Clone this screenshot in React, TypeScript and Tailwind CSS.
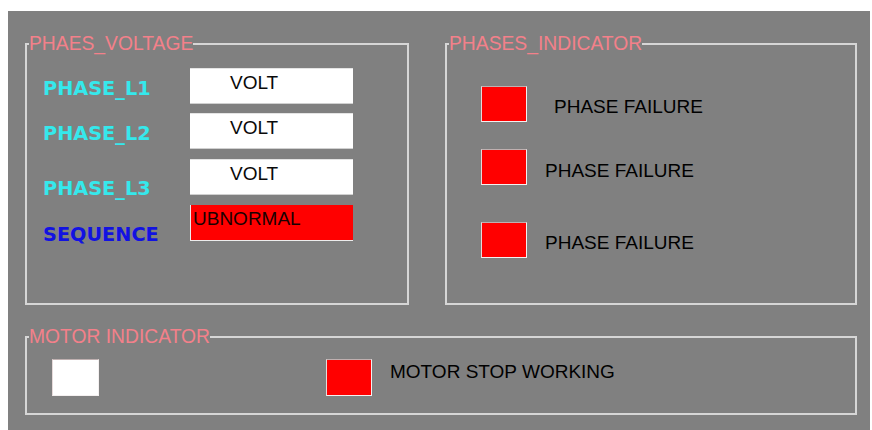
import React from "react";

const sans = { fontFamily: '"Liberation Sans", Arial, sans-serif' };
const bold = { fontFamily: '"DejaVu Sans", Verdana, sans-serif' };

function Group({
  title,
  className,
  children,
}: {
  title: string;
  className: string;
  children: React.ReactNode;
}) {
  return (
    <fieldset className={`border-2 border-[#d6d6d6] px-0 ${className}`}>
      <legend
        className="ml-[2px] p-0 text-[19.3px] leading-[20px] text-[#f3808a]"
        style={sans}
      >
        {title}
      </legend>
      {children}
    </fieldset>
  );
}

function ValueBox({ text, alarm, className }: { text: string; alarm?: boolean; className: string }) {
  return (
    <div
      className={`h-[36px] w-[163px] ${
        alarm
          ? "border-b border-l border-[#ececec] bg-[#ff0000] pl-[2px] text-[#1a0000]"
          : "border-b border-t border-b-[#d0d0d0] border-t-[#e4e4e4] bg-white pl-[40px] text-[#0a0a0a]"
      } pt-[4px] text-[19px] leading-[20px] ${className}`}
      style={sans}
    >
      {text}
    </div>
  );
}

function Lamp({ on, className }: { on: boolean; className: string }) {
  return (
    <div
      className={`h-[36px] w-[46px] shrink-0 border border-b-[#f4f0f0] border-l-[#e6dada] border-r-[#f4f0f0] border-t-[#bfb0b0] ${
        on ? "bg-[#ff0000]" : "bg-white"
      } ${className}`}
    />
  );
}

export default function App() {
  const labels = [
    { text: "PHASE_L1", color: "text-[#35e8ec]", mt: "mt-[25px]" },
    { text: "PHASE_L2", color: "text-[#35e8ec]", mt: "mt-[25px]" },
    { text: "PHASE_L3", color: "text-[#35e8ec]", mt: "mt-[35px]" },
    { text: "SEQUENCE", color: "text-[#1212e2]", mt: "mt-[26px]" },
  ];

  return (
    <div className="h-[430px] w-[872px] bg-white pl-[8px] pr-[2px] pt-[11px]">
      <div className="flex h-[419px] w-[862px] flex-col bg-[#808080] pl-[17px] pt-[23px]">
        <div className="flex gap-[36px]">
          <Group title="PHAES_VOLTAGE" className="w-[384px]">
            <div className="flex h-[249px]">
              <div className="flex w-[163px] shrink-0 flex-col pl-[16px]">
                {labels.map((l) => (
                  <div
                    key={l.text}
                    className={`${l.mt} text-[19.3px] font-bold leading-[20px] ${l.color}`}
                    style={bold}
                  >
                    {l.text}
                  </div>
                ))}
              </div>
              <div className="flex flex-col">
                <ValueBox text="VOLT" className="mt-[14px]" />
                <ValueBox text="VOLT" className="mt-[9px]" />
                <ValueBox text="VOLT" className="mt-[10px]" />
                <ValueBox text="UBNORMAL" alarm className="mt-[10px]" />
              </div>
            </div>
          </Group>

          <Group title="PHASES_INDICATOR" className="w-[412px]">
            <div className="flex h-[249px] flex-col pl-[34px]">
              <div className="mt-[32px] flex items-start">
                <Lamp on className="" />
                <span className="ml-[27px] mt-[11px] text-[19px] leading-[20px] text-black" style={sans}>
                  PHASE FAILURE
                </span>
              </div>
              <div className="mt-[27px] flex items-start">
                <Lamp on className="" />
                <span className="ml-[18px] mt-[12px] text-[19px] leading-[20px] text-black" style={sans}>
                  PHASE FAILURE
                </span>
              </div>
              <div className="mt-[37px] flex items-start">
                <Lamp on className="" />
                <span className="ml-[18px] mt-[11px] text-[19px] leading-[20px] text-black" style={sans}>
                  PHASE FAILURE
                </span>
              </div>
            </div>
          </Group>
        </div>

        <Group title="MOTOR INDICATOR" className="mt-[22px] w-[832px]">
          <div className="flex h-[66px] items-start pl-[25px] pt-[12px]">
            <Lamp on={false} className="h-[37px] w-[47px]" />
            <Lamp on className="ml-[227px] h-[37px]" />
            <span className="ml-[18px] mt-[3px] text-[19px] leading-[20px] text-black" style={sans}>
              MOTOR STOP WORKING
            </span>
          </div>
        </Group>
      </div>
    </div>
  );
}
